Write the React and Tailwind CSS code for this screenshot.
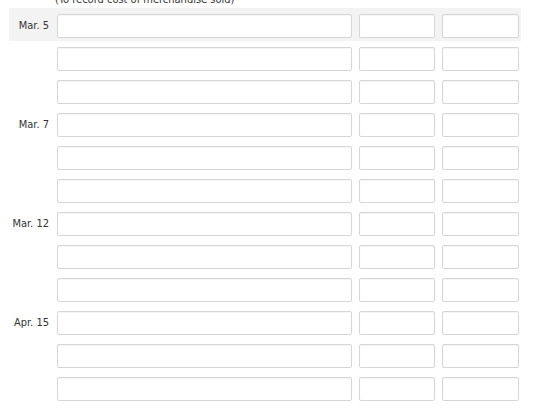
const rows = [
  { date: 'Mar. 5', shaded: true },
  { date: '' },
  { date: '' },
  { date: 'Mar. 7' },
  { date: '' },
  { date: '' },
  { date: 'Mar. 12' },
  { date: '' },
  { date: '' },
  { date: 'Apr. 15' },
  { date: '' },
  { date: '' },
];

function Field({ className }) {
  return (
    <input
      type="text"
      className={`h-6 rounded-[2px] border border-[#d6d6d6] bg-white shadow-[inset_0_1px_1px_rgba(0,0,0,0.04)] outline-none ${className}`}
    />
  );
}

export default function App() {
  return (
    <div
      className="w-[560px] h-[413px] overflow-hidden bg-white text-[#333] text-[11px]"
      style={{ fontFamily: "'DejaVu Sans Condensed', 'DejaVu Sans', sans-serif" }}
    >
      <p className="-mt-[7px] h-[15px] pl-[55px] leading-[13px]">(To record cost of merchandise sold)</p>
      <div className="ml-[9px] w-[512px]">
        {rows.map((r, i) => (
          <div
            key={i}
            className={`flex items-center pt-[6px] pb-[3px] ${r.shaded ? 'bg-[#f3f3f3]' : ''}`}
          >
            <div className="w-[48px] pr-[8px] text-right whitespace-nowrap">{r.date}</div>
            <Field className="w-[295px]" />
            <Field className="ml-[7px] w-[76px]" />
            <Field className="ml-[7px] w-[77px]" />
          </div>
        ))}
      </div>
    </div>
  );
}
